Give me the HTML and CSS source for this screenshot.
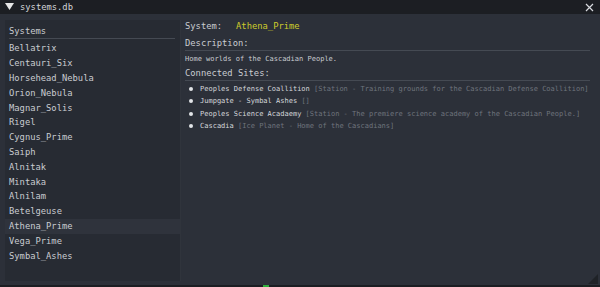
FILE: index.html
```html
<!DOCTYPE html>
<html lang="en">
<head>
  <meta charset="UTF-8">
  <link rel="stylesheet" href="styles.css">
  <title>systems.db</title>
</head>
<body>
  <div class="window">
    <div class="titlebar">
      <svg class="collapse" width="9" height="8" viewBox="0 0 9 8"><polygon points="0,0 9,0 4.5,7" fill="#e6e6e6"/></svg>
      <span class="title">systems.db</span>
      <svg class="close" width="9" height="9" viewBox="0 0 9 9"><path d="M1 1 L8 8 M8 1 L1 8" stroke="#d8dadf" stroke-width="1.2"/></svg>
    </div>
    <div class="content">
      <div class="sidebar">
        <div class="list-head">Systems</div>
        <ul class="system-list">
          <li>Bellatrix</li>
          <li>Centauri_Six</li>
          <li>Horsehead_Nebula</li>
          <li>Orion_Nebula</li>
          <li>Magnar_Solis</li>
          <li>Rigel</li>
          <li>Cygnus_Prime</li>
          <li>Saiph</li>
          <li>Alnitak</li>
          <li>Mintaka</li>
          <li>Alnilam</li>
          <li>Betelgeuse</li>
          <li class="selected">Athena_Prime</li>
          <li>Vega_Prime</li>
          <li>Symbal_Ashes</li>
        </ul>
      </div>
      <div class="details">
        <div class="sys-row"><span class="label">System:</span><span class="sys-name">Athena_Prime</span></div>
        <div class="section">Description:</div>
        <p class="desc">Home worlds of the Cascadian People.</p>
        <div class="section">Connected Sites:</div>
        <ul class="sites">
          <li>Peoples Defense Coallition <span class="note">[Station - Training grounds for the Cascadian Defense Coallition]</span></li>
          <li>Jumpgate - Symbal Ashes <span class="note">[]</span></li>
          <li>Peoples Science Acadaemy <span class="note">[Station - The premiere science academy of the Cascadian People.]</span></li>
          <li>Cascadia <span class="note">[Ice Planet - Home of the Cascadians]</span></li>
        </ul>
      </div>
    </div>
    <div class="grip"></div>
  </div>
  <div class="bottom-strip"><span class="green-mark"></span></div>
</body>
</html>
```

FILE: styles.css
```css
body {
  margin: 0;
  width: 600px;
  height: 287px;
  background-color: #1b1d22;
  font-family: 'DejaVu Sans Mono', 'Liberation Mono', monospace;
  color: #c9ccd1;
  overflow: hidden;
}

.window {
  position: relative;
  height: 285px;
  background-color: #2c3039;
  display: flex;
  flex-direction: column;
}

.titlebar {
  height: 14px;
  background-color: #1c1e23;
  display: flex;
  align-items: center;
  padding: 0 5px;
  font-size: 8.8px;
}

.collapse {
  margin-right: 6px;
}

.title {
  flex: 1;
  color: #d2d4d8;
}

.close {
  margin-right: 1px;
}

.content {
  flex: 1;
  display: flex;
  padding: 6px 5px 4px 5px;
}

.sidebar {
  width: 176px;
  height: 261px;
  background-color: #272b33;
  border-right: 1px solid #30343c;
  font-size: 8.8px;
  padding: 4px 5px 0 4px;
  box-sizing: border-box;
}

.list-head {
  line-height: 14px;
  border-bottom: 1px solid #454a53;
  margin-bottom: 2.4px;
}

.system-list {
  list-style: none;
  margin: 0 -5px 0 -4px;
  padding: 0;
}

.system-list li {
  height: 14.8px;
  line-height: 14.8px;
  padding-left: 4px;
}

.system-list li.selected {
  background-color: #2f333c;
}

.details {
  flex: 1;
  padding-left: 4px;
  margin-top: -1px;
}

.sys-row {
  font-size: 8.8px;
  line-height: 14px;
  margin-bottom: 3px;
}

.label {
  margin-right: 14px;
}

.sys-name {
  color: #cccc2c;
}

.section {
  font-size: 8.8px;
  line-height: 14px;
  border-bottom: 1px solid #454a53;
  margin-right: 5px;
}

.desc {
  font-size: 7.03px;
  line-height: 12px;
  margin: 2px 0 1.3px 0;
  color: #c9ccd1;
}

.sites {
  list-style: none;
  margin: 2px 0 0 0;
  padding: 0;
  font-size: 7.03px;
}

.sites li {
  position: relative;
  height: 12.2px;
  line-height: 12.2px;
  padding-left: 15px;
  white-space: nowrap;
  color: #d6d8dc;
}

.sites li::before {
  content: '';
  position: absolute;
  left: 4px;
  top: 4px;
  width: 4px;
  height: 4px;
  border-radius: 50%;
  background-color: #e2e4e8;
}

.note {
  color: #6f747d;
}

.grip {
  position: absolute;
  right: 2px;
  bottom: 1px;
  width: 0;
  height: 0;
  border-left: 10px solid transparent;
  border-bottom: 10px solid #1f2227;
}

.bottom-strip {
  height: 2px;
  position: relative;
}

.green-mark {
  position: absolute;
  left: 263px;
  top: 0;
  width: 6px;
  height: 2px;
  background-color: #2fae3c;
}
```
